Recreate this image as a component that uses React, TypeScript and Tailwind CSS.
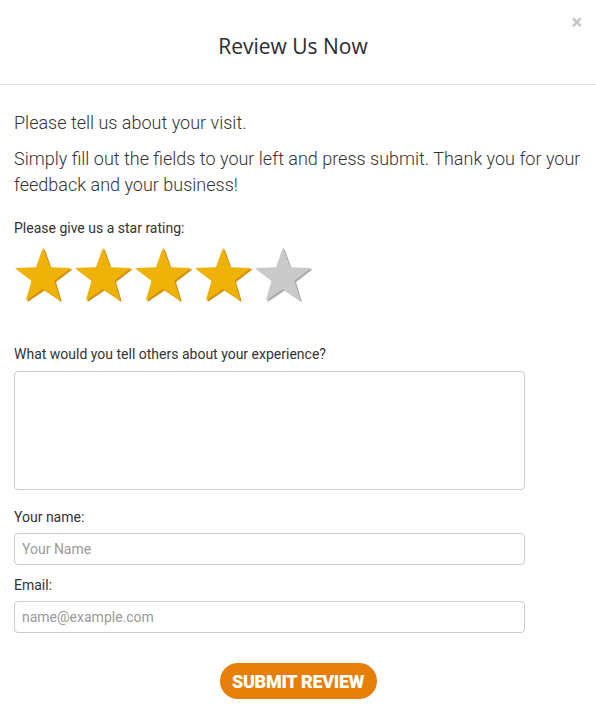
import React from "react";

const Star = ({ on }: { on: boolean }) => {
  const pts =
    "29,0.5 36.05,20.29 57.06,20.88 40.41,33.71 46.34,53.87 29,42 11.66,53.87 17.59,33.71 0.94,20.88 21.95,20.29";
  return (
    <svg width="60" height="56" viewBox="0 0 60 56">
      <polygon points={pts} transform="translate(1.6 1.4)" fill={on ? "#d38f06" : "#a9a9a9"} />
      <polygon points={pts} fill={on ? "#eeb208" : "#cacaca"} />
    </svg>
  );
};

const label = "text-[14px] leading-[20px] text-[#333]";
const field =
  "w-full border border-[#cccccc] rounded-[4px] px-[7px] text-[14px] text-[#333] placeholder:text-[#9a9a9a] outline-none bg-white";

export default function App() {
  return (
    <div className="w-[596px] h-[714px] bg-white font-['Roboto',sans-serif] overflow-hidden">
      {/* header */}
      <div className="relative h-[85px] border-b border-[#e5e5e5] flex items-center justify-center pt-[9px] pr-[10px]">
        <h1 className="font-['Open_Sans',sans-serif] text-[21px] text-[#2b2b2b]">Review Us Now</h1>
        <span className="absolute top-[8px] right-[14px] text-[20px] font-bold text-[#c4c4c4] leading-[28px]">×</span>
      </div>

      <div className="px-[14px] pt-[25px]">
        <p className="text-[18px] leading-[26px] font-light text-[#333]">Please tell us about your visit.</p>
        <p className="mt-[10px] text-[18px] leading-[26px] font-light text-[#333]">
          Simply fill out the fields to your left and press submit. Thank you for your feedback and your business!
        </p>

        <p className={`${label} mt-[20px]`}>Please give us a star rating:</p>
        <div className="flex mt-[9px]">
          <Star on />
          <Star on />
          <Star on />
          <Star on />
          <Star on={false} />
        </div>

        <div className="w-[511px]">
          <p className={`${label} mt-[41px] mb-[7px]`}>What would you tell others about your experience?</p>
          <textarea className={`${field} h-[119px] resize-none block`} />

          <p className={`${label} mt-[17px] mb-[6px]`}>Your name:</p>
          <input className={`${field} h-[32px] block`} placeholder="Your Name" />

          <p className={`${label} mt-[10px] mb-[6px]`}>Email:</p>
          <input className={`${field} h-[32px] block`} placeholder="name@example.com" />
        </div>

        <div className="flex justify-center mt-[30px]">
          <button className="w-[157px] h-[36px] rounded-full bg-[#e67f07] text-white text-[18px] font-black tracking-[-0.3px]">
            SUBMIT REVIEW
          </button>
        </div>
      </div>
    </div>
  );
}
